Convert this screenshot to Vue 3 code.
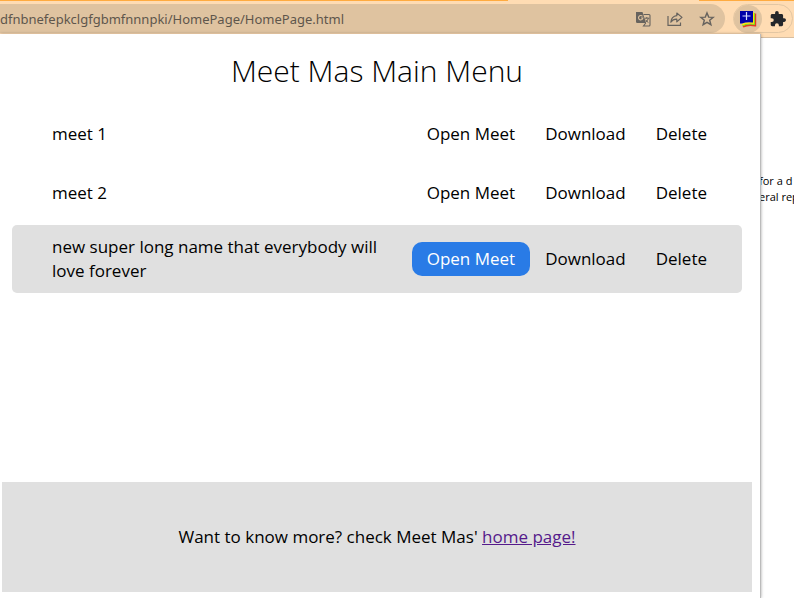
<script setup>
const meets = [
  { name: 'meet 1', active: false },
  { name: 'meet 2', active: false },
  { name: 'new super long name that everybody will love forever', active: true }
]
</script>

<template>
  <div class="browser">
    <header class="toolbar">
      <div class="omnibox">
        <span class="url">dfnbnefepkclgfgbmfnnnpki/HomePage/HomePage.html</span>
        <button class="tool" aria-label="Translate this page">
          <svg width="16" height="16" viewBox="0 0 16 16" fill="none">
            <path d="M1 1h6.500l3.500 11H2.200Q1 12 1 10.800Z" fill="#67635e" />
            <path d="M8.500 3.500h5.500q1 0 1 1V14q0 1-1 1H8.500l2.300-3" stroke="#67635e" stroke-width="1.100" />
            <path d="M7.500 5.400A2.200 2.200 0 1 0 7.900 7H6" stroke="#dfc3a0" stroke-width="1.100" />
            <path d="M9.500 7.200h4.800M11.800 6v1.200M13.400 7.400q-.8 2.600-3 4M10.700 8.800q1 1.700 2.700 2.700" stroke="#67635e" />
          </svg>
        </button>
        <button class="tool" aria-label="Share this page">
          <svg width="16" height="16" viewBox="0 0 16 16" fill="none" stroke="#67635e" stroke-width="1.200">
            <path d="M1 5v9.400h12.500V11.500" />
            <path d="M9.800 2l5.200 4.400-5.200 4.400V8.200Q6 8 3.800 11.200 4.400 5.400 9.800 4.700Z" stroke-linejoin="round" />
          </svg>
        </button>
        <button class="tool" aria-label="Bookmark this page">
          <svg width="16" height="16" viewBox="0 0 16 16" fill="none" stroke="#67635e" stroke-width="1.400">
            <path d="M8 1.900l1.700 4.200 4.500.3-3.500 2.900 1.200 4.400L8 11.300l-3.900 2.400 1.200-4.400L1.800 6.400l4.500-.3Z" />
          </svg>
        </button>
      </div>
      <div class="extensions">
        <button class="extension open" aria-label="Meet Mas">
          <svg width="18" height="18" viewBox="0 0 18 18">
            <path d="M4 16.800Q9 14 16.300 15.500V3.500" fill="none" stroke="#e33a22" stroke-width="1.800" />
            <path d="M3.500 15.800Q8 13 15.300 14.300V3" fill="none" stroke="#7ddc20" stroke-width="1.300" />
            <path d="M3 14.600Q8 12 14.400 13.200V2.500" fill="none" stroke="#ffe600" stroke-width="1.200" />
            <path d="M1 1h13v11.500Q8 11.500 3 13.500H1Z" fill="#0000a8" />
            <path d="M3.500 6h8M7.500 2v8" stroke="#d8dcff" stroke-width="1.200" />
          </svg>
        </button>
        <button class="extension" aria-label="Extensions">
          <svg width="16" height="16" viewBox="1 1 22 22" fill="#24262a">
            <path d="M20.500 11H19V7c0-1.100-.9-2-2-2h-4V3.500a2.500 2.500 0 0 0-5 0V5H4c-1.100 0-2 .9-2 2v3.800h1.500a2.700 2.700 0 0 1 0 5.400H2V20c0 1.100.9 2 2 2h3.800v-1.500a2.700 2.700 0 0 1 5.400 0V22H17c1.100 0 2-.9 2-2v-4h1.500a2.500 2.500 0 0 0 0-5Z" />
          </svg>
        </button>
      </div>
    </header>

    <aside class="page">
      <p>for a d</p>
      <p>eral rep</p>
    </aside>

    <main class="popup">
      <h1>Meet Mas Main Menu</h1>
      <ul class="meets">
        <li v-for="meet in meets" :key="meet.name" class="meet" :class="{ active: meet.active }">
          <span class="name">{{ meet.name }}</span>
          <button class="action" :class="{ primary: meet.active }">Open Meet</button>
          <button class="action">Download</button>
          <button class="action">Delete</button>
        </li>
      </ul>
      <footer>
        <p>Want to know more? check Meet Mas' <a href="#">home page!</a></p>
      </footer>
    </main>
  </div>
</template>

<style>
body {
  margin: 0;
  background: #fff;
}
</style>

<style scoped>
* {
  box-sizing: border-box;
}

.browser {
  position: relative;
  min-height: 100vh;
  overflow: hidden;
  font-family: "Open Sans", "Noto Sans", sans-serif;
}

button {
  border: 0;
  background: none;
  font: inherit;
  color: inherit;
}

.toolbar {
  display: flex;
  gap: 8px;
  height: 38px;
  padding-top: 4px;
  background:
    linear-gradient(#ffab40, #ffab40) 0 0 / 64% 1px no-repeat,
    linear-gradient(#ffab40, #ffab40) 100% 0 / 12% 1px no-repeat,
    #ffdcb3;
  border-bottom: 1px solid #d6bda0;
}

.omnibox {
  display: flex;
  flex: 1;
  align-items: center;
  height: 29px;
  padding-right: 2px;
  border-radius: 0 15px 15px 0;
  background: #dfc3a0;
}

.url {
  flex: 1;
  font-family: "Noto Sans", sans-serif;
  font-size: 13px;
  color: #5e564c;
}

.tool {
  display: flex;
  justify-content: center;
  width: 32px;
  padding: 0;
}

.extensions {
  display: flex;
  gap: 2px;
  align-items: center;
  height: 29px;
  margin-right: 1px;
  border: 1px solid #e2c6a3;
  border-radius: 15px;
}

.extension {
  display: flex;
  align-items: center;
  justify-content: center;
  width: 28px;
  height: 28px;
  padding: 0;
}

.extension.open {
  border-radius: 50%;
  background: #dfc3a0;
}

.page {
  display: flex;
  flex-direction: column;
  align-items: flex-start;
  width: 35px;
  margin: 135px 0 0 auto;
  font-size: 11px;
  line-height: 16px;
  white-space: nowrap;
}

.page p {
  margin: 0;
}

.popup {
  position: absolute;
  top: 34px;
  bottom: 0;
  left: 0;
  right: 33px;
  display: flex;
  flex-direction: column;
  padding: 16px 8px 6px 2px;
  background: #fff;
  border-right: 1px solid #bbb;
  box-shadow: 0 0 3px rgba(0, 0, 0, 0.35);
  color: #000;
  font-size: 17px;
  line-height: 24px;
}

h1 {
  margin: 0 0 15px;
  font-size: 30px;
  font-weight: 300;
  line-height: 42px;
  text-align: center;
}

.meets {
  display: flex;
  flex-direction: column;
  gap: 5px;
  margin: 0;
  padding: 0 10px;
  list-style: none;
}

.meet {
  display: flex;
  align-items: center;
  padding: 10px 20px 10px 40px;
  border-radius: 5px;
}

.meet.active {
  background: #e0e0e0;
}

.name {
  flex: 1;
}

.action {
  padding: 5px 15px;
  border-radius: 10px;
}

.action.primary {
  background: #297be6;
  color: #fff;
}

footer {
  display: flex;
  align-items: center;
  justify-content: center;
  height: 110px;
  margin-top: auto;
  background: #e0e0e0;
}

footer p {
  margin: 0;
}

footer a {
  color: #551a8b;
}
</style>
